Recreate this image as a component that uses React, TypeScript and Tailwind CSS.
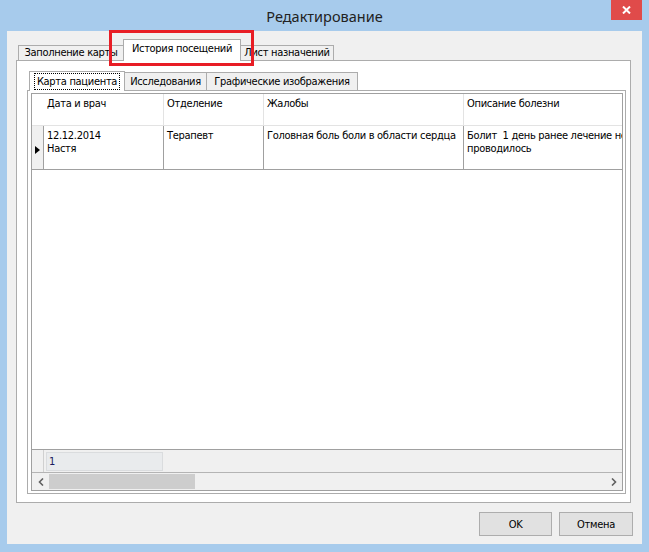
import type { ReactNode } from 'react';

function OuterTab({ label, active, w }: { label: string; active?: boolean; w: string }) {
  if (active) {
    return (
      <div className={`${w} -ml-px relative z-10 -mb-px h-[22px] bg-white border border-b-0 border-[#ACACAC] flex justify-center pt-[2px]`}>
        {label}
      </div>
    );
  }
  return (
    <div className={`${w} -ml-px h-[15px] bg-[#F0F0F0] border border-b-0 border-[#ACACAC] flex justify-center leading-[14px]`}>
      {label}
    </div>
  );
}

function InnerTab({ label, active, w }: { label: string; active?: boolean; w: string }) {
  if (active) {
    return (
      <div className={`${w} relative z-10 -mb-px h-[20px] bg-white border border-b-0 border-[#ACACAC] flex justify-center pt-[1px]`}>
        <span className="border border-dotted border-black px-[2px] h-[17px] leading-[15px]">{label}</span>
      </div>
    );
  }
  return (
    <div className={`${w} -ml-px h-[18px] bg-[#F0F0F0] border border-b-0 border-[#ACACAC] flex justify-center pt-[2px] leading-[14px]`}>
      {label}
    </div>
  );
}

function Cell({ w, children, head }: { w: string; children?: ReactNode; head?: boolean }) {
  return (
    <div className={`${w} shrink-0 h-full border-r ${head ? 'border-[#E3E3E3]' : 'border-[#A0A0A0]'} pl-[3px] pt-[3px] whitespace-nowrap overflow-hidden`}>
      {children}
    </div>
  );
}

export default function App() {
  return (
    <div className="w-[649px] h-[552px] bg-[#A7CBEC] flex flex-col text-[11px] leading-[13px] tracking-[-0.3px] text-black font-['DejaVu_Sans_Condensed','DejaVu_Sans',sans-serif] overflow-hidden">
      {/* Title bar */}
      <div className="h-[31px] shrink-0 relative flex justify-center items-start pt-[6px]">
        <span className="text-[14.5px] leading-[20px] tracking-normal text-[#222] font-['Noto_Sans',sans-serif]">Редактирование</span>
        <div className="absolute right-[7px] top-0 w-[31px] h-[20px] bg-[#E04B4A] flex items-center justify-center">
          <svg width="9" height="8" viewBox="0 0 9 8">
            <path d="M1 0.5 L8 7.5 M8 0.5 L1 7.5" stroke="#fff" strokeWidth="2" />
          </svg>
        </div>
      </div>

      {/* Client area */}
      <div className="mx-[7px] h-[513px] bg-[#F0F0F0] flex flex-col">
        <div className="ml-[9px] mr-[11px] mt-[8px] flex flex-col relative">
          {/* Outer tabs */}
          <div className="h-[21px] flex items-end pl-[3px]">
            <OuterTab label="Заполнение карты" w="w-[106px]" />
            <OuterTab label="История посещений" w="w-[118px]" active />
            <OuterTab label="Лист назначений" w="w-[94px]" />
          </div>
          {/* highlight */}
          <div className="absolute left-[93px] top-[-9px] w-[145px] h-[36px] border-[3px] border-[#E81D25] z-20" />

          {/* Outer panel */}
          <div className="h-[443px] border border-[#ACACAC] bg-white pl-[10px] pt-[10px] pr-[4px]">
            <div className="flex flex-col">
              <div className="h-[19px] flex items-end pl-[2px]">
                <InnerTab label="Карта пациента" w="w-[96px]" active />
                <InnerTab label="Исследования" w="w-[83px]" />
                <InnerTab label="Графические изображения" w="w-[152px]" />
              </div>
              <div className="h-[404px] border border-[#ACACAC] bg-white pl-[3px] pr-[2px] pt-[2px] pb-[2px] flex flex-col">
                {/* Grid */}
                <div className="flex-1 border border-[#A0A0A0] bg-white flex flex-col overflow-hidden">
                  <div className="h-[32px] shrink-0 border-b border-[#E3E3E3] flex bg-white">
                    <div className="w-[12px] shrink-0 h-full" />
                    <Cell w="w-[120px]" head>Дата и врач</Cell>
                    <Cell w="w-[100px]" head>Отделение</Cell>
                    <Cell w="w-[200px]" head>Жалобы</Cell>
                    <Cell w="w-[220px]" head>Описание болезни</Cell>
                  </div>
                  <div className="h-[44px] shrink-0 border-b border-[#A0A0A0] flex">
                    <div className="w-[12px] shrink-0 h-full border-r border-[#A0A0A0] bg-[#F0F0F0] flex items-center pl-[3px] pt-[4px]">
                      <div className="w-0 h-0 border-y-[4px] border-y-transparent border-l-[5px] border-l-black" />
                    </div>
                    <Cell w="w-[120px]">
                      <div>12.12.2014</div>
                      <div>Настя</div>
                    </Cell>
                    <Cell w="w-[100px]">Терапевт</Cell>
                    <Cell w="w-[200px]">Головная боль боли в области сердца</Cell>
                    <Cell w="w-[220px]">
                      <div>Болит&nbsp; 1 день ранее лечение не</div>
                      <div>проводилось</div>
                    </Cell>
                  </div>
                  <div className="flex-1 bg-white" />
                  {/* Footer */}
                  <div className="h-[23px] shrink-0 border-t border-[#A0A0A0] bg-[#F0F0F0] flex">
                    <div className="w-[12px] shrink-0 h-full border-r border-[#D0D0D0]" />
                    <div className="ml-[2px] mt-[2px] w-[117px] h-[19px] bg-[#E9EBED] border border-[#DADCDE] pl-[2px] pt-[2px] text-[#1A1A60]">1</div>
                  </div>
                  {/* Horizontal scrollbar */}
                  <div className="h-[18px] shrink-0 border-t border-[#B4B4B4] bg-[#F0F0F0] flex items-center">
                    <div className="w-[17px] h-full flex items-center justify-center">
                      <svg width="6" height="8" viewBox="0 0 6 8">
                        <path d="M5 0.5 L1.5 4 L5 7.5" stroke="#606060" strokeWidth="1.6" fill="none" />
                      </svg>
                    </div>
                    <div className="w-[146px] h-[15px] bg-[#CDCDCD]" />
                    <div className="flex-1" />
                    <div className="w-[17px] h-full flex items-center justify-center">
                      <svg width="6" height="8" viewBox="0 0 6 8">
                        <path d="M1 0.5 L4.5 4 L1 7.5" stroke="#606060" strokeWidth="1.6" fill="none" />
                      </svg>
                    </div>
                  </div>
                </div>
              </div>
            </div>
          </div>
        </div>

        {/* Buttons */}
        <div className="mt-[9px] flex justify-end gap-[7px] pr-[9px]">
          <button className="w-[73px] h-[24px] bg-[#E1E1E1] border border-[#ADADAD] text-[11px]">OK</button>
          <button className="w-[74px] h-[24px] bg-[#E1E1E1] border border-[#ADADAD] text-[11px]">Отмена</button>
        </div>
      </div>
    </div>
  );
}
